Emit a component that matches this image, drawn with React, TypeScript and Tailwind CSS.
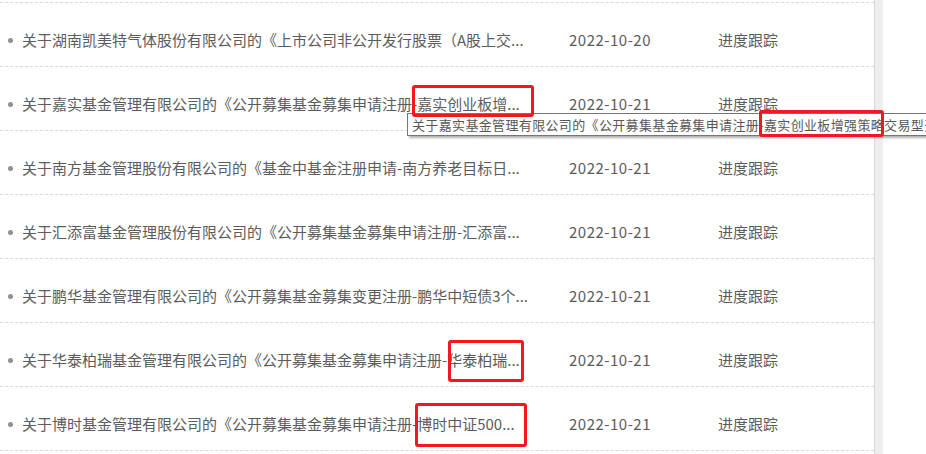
import type { FC } from 'react';

const rows = [
  {
    title: '关于湖南凯美特气体股份有限公司的《上市公司非公开发行股票（A股上交...',
    full: '关于湖南凯美特气体股份有限公司的《上市公司非公开发行股票（A股上交所主板和深交所主板）核准》',
    date: '2022-10-20',
  },
  {
    title: '关于嘉实基金管理有限公司的《公开募集基金募集申请注册-嘉实创业板增...',
    full: '关于嘉实基金管理有限公司的《公开募集基金募集申请注册-嘉实创业板增强策略交易型开放式指数证券投资基金》',
    date: '2022-10-21',
  },
  {
    title: '关于南方基金管理股份有限公司的《基金中基金注册申请-南方养老目标日...',
    full: '关于南方基金管理股份有限公司的《基金中基金注册申请-南方养老目标日期2050五年持有期混合型发起式基金中基金（FOF）》',
    date: '2022-10-21',
  },
  {
    title: '关于汇添富基金管理股份有限公司的《公开募集基金募集申请注册-汇添富...',
    full: '关于汇添富基金管理股份有限公司的《公开募集基金募集申请注册-汇添富中证500指数增强型证券投资基金》',
    date: '2022-10-21',
  },
  {
    title: '关于鹏华基金管理有限公司的《公开募集基金募集变更注册-鹏华中短债3个...',
    full: '关于鹏华基金管理有限公司的《公开募集基金募集变更注册-鹏华中短债3个月定期开放债券型证券投资基金》',
    date: '2022-10-21',
  },
  {
    title: '关于华泰柏瑞基金管理有限公司的《公开募集基金募集申请注册-华泰柏瑞...',
    full: '关于华泰柏瑞基金管理有限公司的《公开募集基金募集申请注册-华泰柏瑞中证1000指数增强型证券投资基金》',
    date: '2022-10-21',
  },
  {
    title: '关于博时基金管理有限公司的《公开募集基金募集申请注册-博时中证500...',
    full: '关于博时基金管理有限公司的《公开募集基金募集申请注册-博时中证500指数增强型证券投资基金》',
    date: '2022-10-21',
  },
];

const Row: FC<{ title: string; full: string; date: string }> = ({ title, full, date }) => {
  return (
    <li className="flex h-[64px] items-start border-b border-dashed border-[#d9d9d9] pt-[27px]">
      <div className="flex h-[20px] items-center pl-[8px] leading-[20px]">
        <span className="h-[5px] w-[5px] shrink-0 rounded-full bg-[#8c9199]" />
        <a title={full} className="ml-[9px] w-[512px] whitespace-nowrap text-[#5c5c5c]">
          {title}
        </a>
        <span className="ml-[35px] w-[149px] tracking-[0.5px] text-[#5c5c5c]">{date}</span>
        <a className="text-[#5c5c5c]">进度跟踪</a>
      </div>
    </li>
  );
};

export default function App() {
  return (
    <div
      className="relative h-[454px] w-[926px] overflow-hidden bg-white text-[15px]"
      style={{ fontFamily: '"Noto Sans CJK SC", "Noto Sans", sans-serif' }}
    >
      <div className="flex h-full">
        <ul className="w-[874px]">
          <li className="h-[3px] border-b border-dashed border-[#d9d9d9]" />
          {rows.map((r, i) => (
            <Row key={i} {...r} />
          ))}
        </ul>
        {/* scrollbar strip */}
        <div className="h-full w-[9px] border-l border-[#d6d6d6] bg-[#eeeeee]" />
      </div>

      {/* native title tooltip */}
      <div className="absolute left-[407px] top-[113px] flex h-[23px] items-center whitespace-nowrap border border-[#767676] bg-white px-[4px] text-[13px] tracking-[0.35px] text-[#575757] shadow-[2px_2px_2px_rgba(0,0,0,0.3)]">
        关于嘉实基金管理有限公司的《公开募集基金募集申请注册-嘉实创业板增强策略交易型开放式指数证券投资基金》
      </div>

      {/* red annotation boxes */}
      <div className="absolute left-[412px] top-[85px] h-[32px] w-[122px] rounded-[3px] border-[3px] border-[#f5161e]" />
      <div className="absolute left-[759px] top-[110px] h-[27px] w-[125px] rounded-[3px] border-[3px] border-[#f5161e]" />
      <div className="absolute left-[448px] top-[340px] h-[42px] w-[76px] rounded-[3px] border-[3px] border-[#f5161e]" />
      <div className="absolute left-[415px] top-[403px] h-[44px] w-[112px] rounded-[3px] border-[3px] border-[#f5161e]" />
    </div>
  );
}
